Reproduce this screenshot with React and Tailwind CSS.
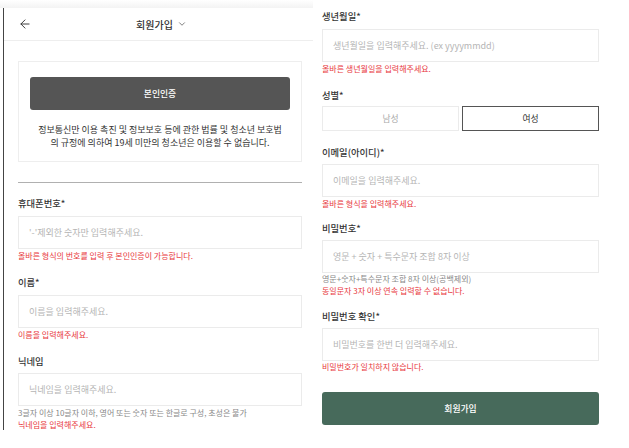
import { ArrowLeft, ChevronDown } from "lucide-react";

const Label = ({ children, className = "" }) => (
  <p className={`text-[9.3px] leading-[14px] text-[#333] font-medium ${className}`}>{children}</p>
);

const Input = ({ placeholder, className = "" }) => (
  <input
    placeholder={placeholder}
    className={`block w-full h-[33px] border border-[#ebebeb] px-[10px] text-[9px] outline-none placeholder:text-[#b5b5b5] ${className}`}
  />
);

const Error = ({ children, className = "" }) => (
  <p className={`text-[8px] leading-[12px] text-[#e8383d] ${className}`}>{children}</p>
);

const Help = ({ children, className = "" }) => (
  <p className={`text-[8px] leading-[12px] text-[#888] ${className}`}>{children}</p>
);

export default function App() {
  return (
    <div className="w-[629px] h-[448px] bg-white flex overflow-hidden font-['Noto_Sans_CJK_KR',sans-serif]">
      {/* left: first screen */}
      <div className="w-[313px] shrink-0 relative">
        <div className="h-[8px] bg-gradient-to-b from-white to-[#f3f3f3]" />
        <div className="ml-[3px] h-[422px] border-l border-[#444]">
          <div className="h-[33px] border-b border-[#eeeeee] flex items-center relative">
            <ArrowLeft size={14} strokeWidth={1.6} className="absolute left-[14px] text-[#333]" />
            <div className="mx-auto flex items-center gap-[4px] pl-[6px]">
              <span className="text-[10px] text-[#333] font-medium">회원가입</span>
              <ChevronDown size={10} strokeWidth={1.8} className="text-[#555]" />
            </div>
          </div>

          <div className="pl-[14px] pr-[11px]">
            <div className="mt-[20px] h-[101px] border border-[#eeeeee] px-[11px] pt-[15px]">
              <button className="w-full h-[33px] rounded-[3px] bg-[#555555] text-white text-[8.8px] font-medium">
                본인인증
              </button>
              <p className="mt-[13px] text-center text-[9px] leading-[13px] text-[#333]">
                정보통신만 이용 촉진 및 정보보호 등에 관한 법률 및 청소년 보호법
                <br />의 규정에 의하여 19세 미만의 청소년은 이용할 수 없습니다.
              </p>
            </div>

            <div className="mt-[20px] h-px bg-[#b0b0b0]" />

            <Label className="mt-[13px]">휴대폰번호*</Label>
            <Input className="mt-[6px]" placeholder="'-'제외한 숫자만 입력해주세요." />
            <Error className="mt-[1px]">올바른 형식의 번호를 입력 후 본인인증이 가능합니다.</Error>

            <Label className="mt-[13px]">이름*</Label>
            <Input className="mt-[6px]" placeholder="이름을 입력해주세요." />
            <Error className="mt-[1px]">이름을 입력해주세요.</Error>

            <Label className="mt-[13px]">닉네임</Label>
            <Input className="mt-[5px]" placeholder="닉네임을 입력해주세요." />
            <Help className="mt-[1px] leading-[11px]">3글자 이상 10글자 이하, 영어 또는 숫자 또는 한글로 구성, 초성은 불가</Help>
            <Error className="leading-[11px]">닉네임을 입력해주세요.</Error>
          </div>
        </div>
      </div>

      {/* right: continued form */}
      <div className="ml-[9px] w-[277px] shrink-0 pt-[9px]">
        <Label>생년월일*</Label>
        <Input className="mt-[6px]" placeholder="생년월일을 입력해주세요. (ex yyyymmdd)" />
        <Error className="mt-[1px]">올바른 생년월일을 입력해주세요.</Error>

        <Label className="mt-[13px]">성별*</Label>
        <div className="mt-[4px] flex gap-[3px]">
          <button className="flex-1 h-[25px] border border-[#ebebeb] text-[8.8px] text-[#aaa]">남성</button>
          <button className="flex-1 h-[25px] border border-[#555] text-[8.8px] text-[#333]">여성</button>
        </div>

        <Label className="mt-[14px]">이메일(아이디)*</Label>
        <Input className="mt-[5px]" placeholder="이메일을 입력해주세요." />
        <Error className="mt-[1px]">올바른 형식을 입력해주세요.</Error>

        <Label className="mt-[11px]">비밀번호*</Label>
        <Input className="mt-[5px] placeholder:text-[#999]" placeholder="영문 + 숫자 + 특수문자 조합 8자 이상" />
        <Help>영문+숫자+특수문자 조합 8자 이상(공백제외)</Help>
        <Error>동일문자 3자 이상 연속 입력할 수 없습니다.</Error>

        <Label className="mt-[12px]">비밀번호 확인*</Label>
        <Input className="mt-[5px] placeholder:text-[#999]" placeholder="비밀번호를 한번 더 입력해주세요." />
        <Error>비밀번호가 일치하지 않습니다.</Error>

        <button className="mt-[19px] w-full h-[33px] rounded-[3px] bg-[#476a5b] text-white text-[8.8px] font-medium">
          회원가입
        </button>
      </div>
    </div>
  );
}
